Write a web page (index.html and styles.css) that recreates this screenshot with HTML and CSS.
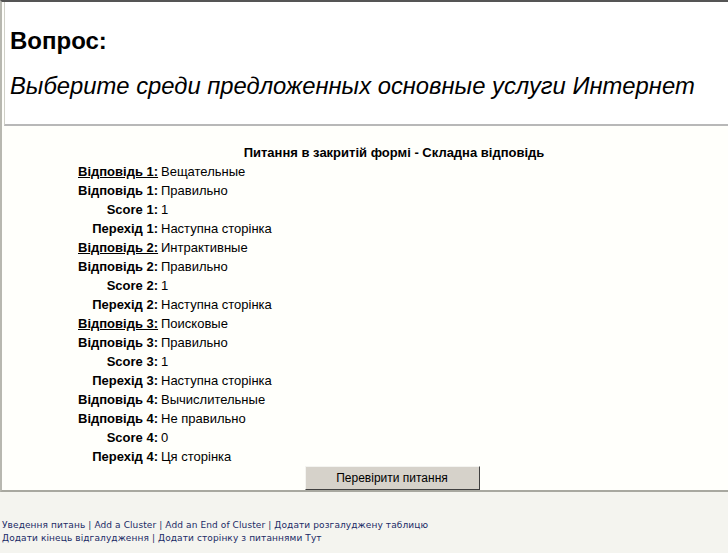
FILE: index.html
```html
<!DOCTYPE html>
<html lang="uk">
<head>
    <meta charset="UTF-8">
    <title>Питання</title>
    <link rel="stylesheet" href="styles.css">
</head>
<body>
    <div class="page">
        <div class="question">
            <h2 class="q-title">Вопрос:</h2>
            <p class="q-text">Выберите среди предложенных основные услуги Интернет</p>
        </div>
        <div class="answers">
            <div class="caption">Питання в закритій формі - Складна відповідь</div>
            <div class="rows">
                <span class="label"><a href="#">Відповідь 1:</a></span><span class="value">Вещательные</span>
                <span class="label">Відповідь 1:</span><span class="value">Правильно</span>
                <span class="label">Score 1:</span><span class="value">1</span>
                <span class="label">Перехід 1:</span><span class="value">Наступна сторінка</span>
                <span class="label"><a href="#">Відповідь 2:</a></span><span class="value">Интрактивные</span>
                <span class="label">Відповідь 2:</span><span class="value">Правильно</span>
                <span class="label">Score 2:</span><span class="value">1</span>
                <span class="label">Перехід 2:</span><span class="value">Наступна сторінка</span>
                <span class="label"><a href="#">Відповідь 3:</a></span><span class="value">Поисковые</span>
                <span class="label">Відповідь 3:</span><span class="value">Правильно</span>
                <span class="label">Score 3:</span><span class="value">1</span>
                <span class="label">Перехід 3:</span><span class="value">Наступна сторінка</span>
                <span class="label">Відповідь 4:</span><span class="value">Вычислительные</span>
                <span class="label">Відповідь 4:</span><span class="value">Не правильно</span>
                <span class="label">Score 4:</span><span class="value">0</span>
                <span class="label">Перехід 4:</span><span class="value">Ця сторінка</span>
            </div>
            <div class="actions">
                <button class="check" type="button">Перевірити питання</button>
            </div>
        </div>
    </div>
    <div class="footer">
        <a href="#">Уведення питань</a> | <a href="#">Add a Cluster</a> | <a href="#">Add an End of Cluster</a> | <a href="#">Додати розгалуджену таблицю</a><br>
        <a href="#">Додати кінець відгалудження</a> | <a href="#">Додати сторінку з питаннями Тут</a>
    </div>
</body>
</html>
```

FILE: styles.css
```css
body {
    margin: 0;
    background-color: #f4f4ef;
    font-family: "Liberation Sans", Arial, sans-serif;
    color: #000;
}
.page {
    border-top: 2px solid #555;
    border-left: 2px solid #b8b8b0;
    border-bottom: 2px solid #a8a8a0;
    background-color: #fffffb;
    height: 488px;
}
.question {
    margin-left: 2px;
    border-left: 1px solid #d0d0c8;
    border-bottom: 2px solid #b8b8b8;
    background-color: #fff;
    height: 121px;
    padding: 1px 0 0 5px;
}
.q-title {
    font-size: 24px;
    font-weight: bold;
    margin: 24px 0 0 0;
    line-height: 28px;
}
.q-text {
    font-size: 23.8px;
    font-style: italic;
    margin: 17px 0 0 0;
    line-height: 28px;
}
.answers {
    padding-top: 18px;
}
.caption {
    font-size: 13px;
    font-weight: bold;
    text-align: center;
    margin-left: 58px;
    line-height: 18px;
}
.rows {
    display: grid;
    grid-template-columns: 80px auto;
    column-gap: 3px;
    padding-left: 76px;
    font-size: 13px;
    line-height: 19px;
}
.label {
    font-weight: bold;
    text-align: right;
    white-space: nowrap;
}
.label a {
    color: #000;
    text-decoration: underline;
}
.actions {
    text-align: center;
    margin-left: 54px;
}
.check {
    width: 175px;
    height: 24px;
    font-family: "Liberation Sans", Arial, sans-serif;
    font-size: 12px;
    background-color: #d6d2ca;
    border: 1px solid;
    border-color: #f4f4f0 #404040 #404040 #f4f4f0;
    padding: 0;
}
.footer {
    padding: 27px 0 0 2px;
    font-family: "DejaVu Sans", Verdana, sans-serif;
    font-size: 9px;
    letter-spacing: 0.1px;
    line-height: 13px;
    color: #1a2a66;
}
.footer a {
    color: #1a2a66;
    text-decoration: none;
}
```
